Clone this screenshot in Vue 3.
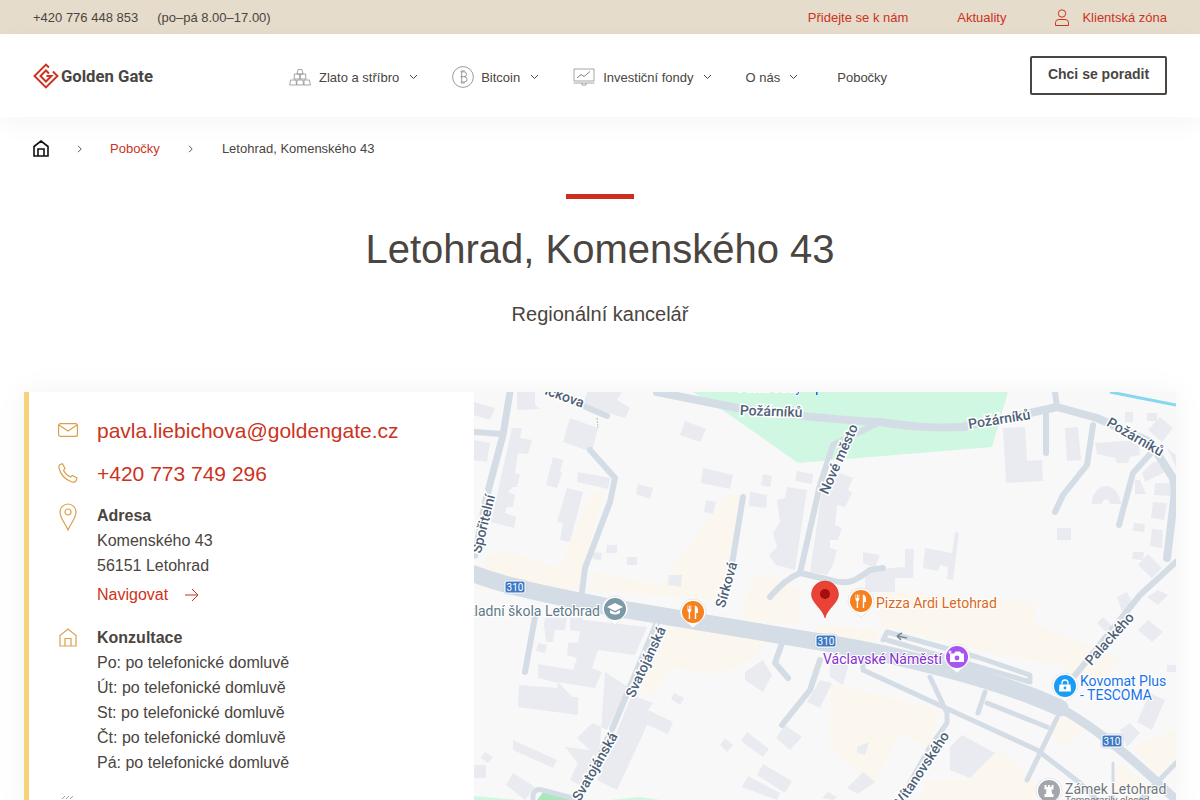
<script setup>
const hours = [
  "Po: po telefonické domluvě",
  "Út: po telefonické domluvě",
  "St: po telefonické domluvě",
  "Čt: po telefonické domluvě",
  "Pá: po telefonické domluvě",
];

// map data, in page coordinates (svg viewBox starts at the map's corner)
const beige = [
  "474,590 487,557 503,550 560,568 567,548 593,492 603,492 585,562 580,590",
  "593,572 660,585 710,518 727,495 740,495 730,558 720,600 590,590",
  "753,575 772,575 800,590 800,625 740,620",
  "670,623 770,640 750,660 720,675 670,667 652,695 640,690",
  "880,590 1037,603 1033,623 1123,660 1090,690 1060,665 1000,655 880,625",
  "830,683 940,710 930,747 900,733 873,783 830,747",
  "997,750 1037,783 1033,800 920,800 927,780 970,780",
  "1063,712 1090,727 1063,747 1052,733",
  "1176,730 1176,760 1157,777 1133,747",
  "820,625 880,630 870,650 800,645",
  "1120,763 1150,790 1130,800 1110,785",
];

const buildings = [
  "474,402 495,408 490,420 474,415",
  "517,392 535,392 535,405 540,409 517,410",
  "587,392 622,392 617,400 630,408 625,418 583,405",
  "570,418 598,428 592,452 563,442",
  "553,457 563,460 560,472 562,473 557,488 546,485",
  "578,472 610,478 608,489 577,482",
  "567,488 583,492 570,542 560,540 563,523 557,522",
  "512,428 522,428 520,438 532,440 528,454 518,453 515,473 520,475 517,487 513,487 508,492 515,495 513,507 507,507 505,513 516,517 514,528 491,522",
  "474,440 490,443 487,462 474,460",
  "685,421 706,429 700,442 680,435",
  "703,468 733,475 730,489 701,483",
  "638,484 653,488 650,499 636,494",
  "706,500 716,502 713,514 704,512",
  "763,474 772,476 770,487 761,485",
  "750,492 767,495 766,508 749,506",
  "797,471 813,474 812,484 795,481",
  "787,487 807,490 795,570 776,565 769,555 777,547 773,533 780,522 777,500 785,498",
  "823,483 832,483 840,473 853,478 848,490 852,493 845,507 837,505 835,525 842,528 838,540 830,540 830,548 837,550 833,565 827,575 810,572",
  "607,545 617,545 617,553 606,553",
  "627,557 637,557 637,565 627,565",
  "593,552 602,553 601,560 593,559",
  "669,575 682,575 681,587 668,585",
  "1003,428 1025,427 1027,461 1042,460 1043,481 1006,483",
  "1065,428 1078,427 1081,460 1067,461",
  "1095,443 1138,440 1140,455 1130,457 1128,463 1117,463 1115,458 1097,454",
  "1125,412 1133,412 1133,422 1125,422",
  "1147,413 1157,413 1157,421 1147,421",
  "1160,417 1173,428 1162,442 1148,430",
  "1167,448 1176,455 1176,467",
  "1160,460 1165,472 1145,482 1142,473 1152,463",
  "1155,483 1172,483 1171,496 1154,495",
  "1135,480 1140,480 1146,494 1135,494",
  "1153,502 1167,503 1164,520 1151,518",
  "1134,523 1145,524 1144,532 1133,531",
  "1152,529 1163,530 1162,548 1150,546",
  "1133,552 1144,552 1143,560 1132,559",
  "1148,554 1162,568 1152,578 1138,565",
  "1057,528 1071,528 1071,540 1057,540",
  "863,552 880,555 875,568 863,563",
  "925,548 952,553 955,532 959,533 953,580 947,579 948,567 940,565 938,571 923,568",
  "865,574 890,568 905,567 905,549 914,549 913,578 895,578 895,592 865,592",
  "583,620 647,627 635,655 598,650 592,668 602,672 595,688 558,682 572,697 578,697 578,715 518,707 519,685 557,688 558,683 538,678 538,664 573,670 577,658 567,655 568,643 578,642",
  "545,618 567,618 565,630 555,630 553,642 546,642 544,625",
  "570,618 583,618 583,632 570,630",
  "538,643 547,645 545,653 536,651",
  "605,672 628,687 607,730 593,723 588,727 577,738 590,750 565,747 578,763 570,780 583,787 600,745",
  "632,695 653,703 648,710 673,722 668,734 647,725 617,790 597,780",
  "513,740 557,760 553,768 513,750",
  "485,752 493,757 488,763 481,758",
  "474,765 486,765 486,778 474,778",
  "513,773 535,787 525,800 506,785",
  "674,693 684,698 680,705 671,699",
  "725,738 733,745 727,752 720,745",
  "747,732 769,749 763,757 741,741",
  "785,725 802,737 790,750 776,738",
  "763,764 792,781 785,793 757,775",
  "748,776 780,793 777,800 742,787",
  "828,792 837,797 833,800 822,798",
  "745,672 763,660 772,675 763,692 745,680",
  "832,683 820,708 807,702 820,680",
  "830,663 850,660 843,685 830,677",
  "857,747 869,742 865,755 857,753",
  "950,747 962,735 995,753 970,778 950,770",
  "847,788 863,772 875,782 858,794",
  "1117,597 1127,592 1132,602 1122,612",
  "1147,597 1158,590 1168,595 1158,605",
  "1097,623 1103,617 1113,627 1107,633",
  "1138,630 1148,620 1163,632 1152,642",
  "1167,665 1176,665 1176,672 1167,672",
  "1150,693 1165,700 1152,730 1137,722",
  "1120,730 1130,723 1140,733 1127,747",
];

const roads = [
  { d: "M474 574 C510 588 560 597 615 608 L826 643 C900 655 1000 680 1060 708", w: 17 },
  { d: "M1060 708 C1100 730 1140 765 1176 800", w: 9 },
  { d: "M510 392 L503 435 L487 495 L475 555", w: 7 },
  { d: "M474 432 L502 434", w: 6 },
  { d: "M560 396 L607 416", w: 6 },
  { d: "M590 450 L615 478 L610 502 L585 568 L582 592", w: 6 },
  { d: "M743 497 L733 558 L724 600", w: 6 },
  { d: "M880 422 L833 445 L820 485 L800 573", w: 6 },
  { d: "M657 392 L737 408 C790 415 840 420 880 422 C920 428 940 428 963 427 L1030 413 L1057 407 L1097 418 L1150 442 L1173 478 L1175 492 L1167 558", w: 8 },
  { d: "M1055 392 L1057 407", w: 6 },
  { d: "M1046 415 L1046 453", w: 6 },
  { d: "M1093 425 L1087 465 L1063 495 L1055 512", w: 6 },
  { d: "M1152 452 L1133 473 L1119 525", w: 6 },
  { d: "M1176 562 L1140 595 L1077 673 L1060 692", w: 6 },
  { d: "M770 597 C780 585 790 577 800 573 L830 580 C850 586 856 580 870 570 L883 568", w: 6 },
  { d: "M782 643 L775 663 L788 678", w: 6 },
  { d: "M820 660 L810 690 L782 725", w: 6 },
  { d: "M535 617 L525 672", w: 6 },
  { d: "M658 620 L613 727 L580 797", w: 6 },
  { d: "M883 640 L887 632 L977 657 L1030 675 L1030 682 L887 640", w: 5 },
  { d: "M863 650 L863 670 L1037 750 L1080 783 L1097 800", w: 5 },
  { d: "M930 677 L947 713 L947 723 L930 747 L903 795", w: 5 },
  { d: "M985 692 L978 713", w: 5 },
  { d: "M987 703 L1047 727", w: 5 },
  { d: "M1057 718 L1027 780", w: 5 },
  { d: "M1176 763 L1140 800", w: 5 },
  { d: "M1113 763 L1113 800", w: 3 },
  { d: "M533 800 L533 795 Q535 788 542 790 L580 800", w: 5 },
];

const roadLabels = [
  { t: "ickova", x: 563, y: 401, r: 20 },
  { t: "Požárníků", x: 771, y: 416, r: 2 },
  { t: "Požárníků", x: 1000, y: 424, r: -9 },
  { t: "Požárníků", x: 1133, y: 441, r: 30 },
  { t: "Nové město", x: 843, y: 461, r: -66 },
  { t: "Spořitelní", x: 488, y: 525, r: -76 },
  { t: "Sírková", x: 731, y: 586, r: -74 },
  { t: "Svatojánská", x: 650, y: 664, r: -65 },
  { t: "Svatojánská", x: 599, y: 769, r: -60 },
  { t: "Palackého", x: 1113, y: 642, r: -48 },
  { t: "Vítanovského", x: 926, y: 771, r: -56 },
];

const shields = [
  { x: 515, y: 587 },
  { x: 826, y: 641 },
  { x: 1112, y: 741 },
];

const pois = [
  { x: 615, y: 609, c: "#7b9aa6", icon: "school" },
  { x: 693, y: 612, c: "#f5811f", icon: "food" },
  { x: 861, y: 601, c: "#f5811f", icon: "food" },
  { x: 957, y: 657, c: "#a855f0", icon: "photo" },
  { x: 1065, y: 686, c: "#1a9bf5", icon: "shop" },
  { x: 1049, y: 791, c: "#a3a7ab", icon: "castle" },
];
</script>

<template>
  <div class="page">
    <div class="topbar">
      <div class="topbar__left">
        <span>+420 776 448 853</span>
        <span>(po–pá 8.00–17.00)</span>
      </div>
      <div class="topbar__right">
        <a class="join">Přidejte se k nám</a>
        <a>Aktuality</a>
        <a class="client">
          <svg width="16" height="17" viewBox="0 0 16 17" fill="none" stroke="#cc3321" stroke-width="1">
            <circle cx="8" cy="4.5" r="3.7" />
            <path d="M1.5 16.5 V13.5 Q1.5 10.5 5 10.5 H11 Q14.5 10.5 14.5 13.5 V16.5 Z" />
          </svg>
          Klientská zóna
        </a>
      </div>
    </div>

    <header class="header">
      <div class="logo">
        <svg width="26" height="26" viewBox="0 0 26 26" fill="none" stroke="#cc3321" stroke-width="2">
          <path d="M16 4.5 L13 1.5 L1.5 13 L13 24.5 L24.5 13 L20 8.5 M16 10.5 L13 7.5 L7.5 13 L13 18.5 L18.5 13 H13.5" />
        </svg>
        <span>Golden Gate</span>
      </div>

      <nav class="nav">
        <a class="nav__item nav__item--first">
          <svg width="22" height="18" viewBox="0 0 22 18" fill="none" stroke="#8f8f8f" stroke-width="0.8">
            <path d="M9 1.5 H13 L14 6 H8 Z M5.5 6 H10.5 L11 11 H5 Z M11.5 6 H16.5 L17 11 H11 Z M1.5 12 H7 L7.5 17 H.7 Z M8 12 H14 L14.5 17 H7.8 Z M15 12 H20.5 L21.3 17 H15 Z" />
          </svg>
          Zlato a stříbro
          <svg class="chev" width="9" height="6" viewBox="0 0 9 6"><path d="M1 1 L4.5 4.5 L8 1" /></svg>
        </a>
        <a class="nav__item nav__item--btc">
          <svg width="22" height="22" viewBox="0 0 22 22" fill="none" stroke="#8f8f8f" stroke-width="0.9">
            <circle cx="11" cy="11" r="10.4" />
            <path d="M8.5 5.8 H12 Q14.5 5.8 14.5 8.3 Q14.5 10.7 12 10.7 H8.5 M12 10.7 Q15 10.7 15 13.3 Q15 16 12 16 H8.5 M9.7 5.8 V16 M10 4 V5.8 M12 4 V5.8 M10 16 V18 M12 16 V18" />
          </svg>
          Bitcoin
          <svg class="chev" width="9" height="6" viewBox="0 0 9 6"><path d="M1 1 L4.5 4.5 L8 1" /></svg>
        </a>
        <a class="nav__item">
          <svg width="22" height="18" viewBox="0 0 22 18" fill="none" stroke="#8f8f8f" stroke-width="0.8">
            <path d="M1 1 H21 V13 H1 Z M.5 15 H21.5 M9 15 V17 H13 V15" />
            <path d="M4 10 L8 6.5 L11 8.5 L17 3.5" stroke="#666" />
          </svg>
          Investiční fondy
          <svg class="chev" width="9" height="6" viewBox="0 0 9 6"><path d="M1 1 L4.5 4.5 L8 1" /></svg>
        </a>
        <a class="nav__item">
          O nás
          <svg class="chev" width="9" height="6" viewBox="0 0 9 6"><path d="M1 1 L4.5 4.5 L8 1" /></svg>
        </a>
        <a class="nav__item nav__item--plain">Pobočky</a>
      </nav>

      <button class="cta">Chci se poradit</button>
    </header>

    <div class="crumbs">
      <svg width="16" height="17" viewBox="0 0 16 17" fill="none" stroke="#111" stroke-width="1.6">
        <path d="M1 16 V6.5 L8 1 L15 6.5 V16 Z M5 16 V9 H11 V16" />
      </svg>
      <svg class="crumb-sep" width="5" height="8" viewBox="0 0 5 8"><path d="M1 .8 L4.2 4 L1 7.2" /></svg>
      <a>Pobočky</a>
      <svg class="crumb-sep" width="5" height="8" viewBox="0 0 5 8"><path d="M1 .8 L4.2 4 L1 7.2" /></svg>
      <span class="crumbs__last">Letohrad, Komenského 43</span>
    </div>

    <div class="heading">
      <div class="heading__bar"></div>
      <h1>Letohrad, Komenského 43</h1>
      <p>Regionální kancelář</p>
    </div>

    <section class="card">
      <div class="info">
        <div class="row row--big">
          <svg class="ico" width="20" height="14" viewBox="0 0 20 14" fill="none" stroke="#dda04a" stroke-width="1.2">
            <rect x=".6" y=".6" width="18.8" height="12.8" rx="2" />
            <path d="M1 2 L10 8 L19 2" />
          </svg>
          <a class="big-link">pavla.liebichova@goldengate.cz</a>
        </div>
        <div class="row row--big">
          <svg class="ico" width="20" height="20" viewBox="0 0 20 20" fill="none" stroke="#dda04a" stroke-width="1.2">
            <path d="M4.5 .8 L7 5.5 L5.5 7.5 Q7.5 11.5 12.5 14 L14.5 12.5 L19 15 L18 18 Q16.5 19.6 14 19 Q3.5 15.5 1 5 Q.5 2.5 2 1.5 Z" />
          </svg>
          <a class="big-link">+420 773 749 296</a>
        </div>
        <div class="row row--adr">
          <svg class="ico ico--pin" width="18" height="28" viewBox="0 0 18 28" fill="none" stroke="#dda04a" stroke-width="1.2">
            <path d="M9 27 C6 20 1 15 1 9 A8 8 0 0 1 17 9 C17 15 12 20 9 27 Z" />
            <circle cx="9" cy="9" r="3" />
          </svg>
          <div class="block">
            <strong>Adresa</strong>
            <div>Komenského 43</div>
            <div>56151 Letohrad</div>
            <a class="nav-link">
              Navigovat
              <svg width="14" height="14" viewBox="0 0 14 14" fill="none" stroke="#cc3321" stroke-width="1">
                <path d="M0 7 H13 M7 1 L13 7 L7 13" />
              </svg>
            </a>
          </div>
        </div>
        <div class="row row--hours">
          <svg class="ico ico--home" width="18" height="19" viewBox="0 0 18 19" fill="none" stroke="#dda04a" stroke-width="1.2">
            <path d="M1 18 V7.5 L9 1 L17 7.5 V18 Z M6 18 V10.5 H12 V18" />
          </svg>
          <div class="block">
            <strong>Konzultace</strong>
            <div v-for="line in hours" :key="line">{{ line }}</div>
          </div>
        </div>
        <div class="row row--more">
          <svg class="ico" width="20" height="12" viewBox="0 0 20 12" fill="none" stroke="#8a8a8a" stroke-width="0.8">
            <path d="M4 4 L7 1 M8 4 L11 1 M12 4 L15 1" />
          </svg>
        </div>
      </div>

      <svg class="map" viewBox="474 392 702 408" width="702" height="408">
        <rect x="474" y="392" width="702" height="408" fill="#f8f8f8" />
        <polygon points="693,392 727,413 798,463 992,447 1008,392" fill="#d0f7e2" />
        <polygon points="474,796 520,800 474,800" fill="#d0f7e2" />
        <polygon points="537,800 545,790 560,795 575,800" fill="#a9e8bf" />
        <polygon points="610,800 640,797 660,800" fill="#d0f7e2" />
        <path d="M1110 392 L1176 405" stroke="#87d7ef" stroke-width="3" fill="none" />
        <polygon v-for="(p, i) in beige" :key="'b' + i" :points="p" fill="#fbf7ee" />
        <polygon v-for="(p, i) in buildings" :key="'h' + i" :points="p" fill="#e9ebf0" />
        <path d="M1092 504 C1092 490 1102 486 1106 486 C1112 486 1120 492 1121 504 L1110 504 C1110 498 1102 498 1102 504 Z" fill="#e9ebf0" />
        <path
          v-for="(r, i) in roads"
          :key="'r' + i"
          :d="r.d"
          :stroke-width="r.w"
          fill="none"
          stroke="#d4dde6"
          stroke-linecap="round"
          stroke-linejoin="round"
        />
        <path d="M597 418 L598 428" stroke="#8fd8b0" stroke-width="1" stroke-dasharray="2 1" />
        <path d="M907 638 L897 636 M897 636 L902 633 M897 636 L901 640" stroke="#7c8a9a" stroke-width="1.6" fill="none" />

        <text x="770" y="392" class="poi-text" fill="#1a73e8" text-anchor="middle">Farní sady</text>
        <rect x="816" y="386" width="1.6" height="9" fill="#1a73e8" />

        <text
          v-for="(l, i) in roadLabels"
          :key="'l' + i"
          class="road-label"
          :x="l.x"
          :y="l.y"
          text-anchor="middle"
          :transform="`rotate(${l.r} ${l.x} ${l.y})`"
        >{{ l.t }}</text>

        <g v-for="(s, i) in shields" :key="'s' + i" :transform="`translate(${s.x} ${s.y})`">
          <rect x="-11" y="-7" width="22" height="14" rx="3" fill="#fff" stroke="#b9c6d6" stroke-width="0.6" />
          <rect x="-9.5" y="-5.5" width="19" height="11" rx="1.5" fill="#3f78c4" />
          <text class="shield-text" y="3.5" text-anchor="middle">310</text>
        </g>

        <text x="600" y="616" class="poi-text" fill="#5f7a87" text-anchor="end">Základní škola Letohrad</text>
        <text x="876" y="608" class="poi-text" fill="#d9691f">Pizza Ardi Letohrad</text>
        <text x="823" y="664" class="poi-text" fill="#8430ce">Václavské Náměstí</text>
        <text x="1080" y="686" class="poi-text" fill="#1a73e8">Kovomat Plus</text>
        <text x="1080" y="700" class="poi-text" fill="#1a73e8">- TESCOMA</text>
        <text x="1065" y="794" class="poi-text" fill="#70757a">Zámek Letohrad</text>
        <text x="1065" y="804" class="poi-small" fill="#70757a">Temporarily closed</text>

        <g v-for="(m, i) in pois" :key="'m' + i" :transform="`translate(${m.x} ${m.y})`">
          <path d="M-13 0 A13 13 0 1 1 13 0 C13 7 6 10 0 16 C-6 10 -13 7 -13 0 Z" fill="#fff" stroke="#cfd3d8" stroke-width="0.5" />
          <circle r="11" :fill="m.c" />
          <g v-if="m.icon === 'food'" fill="#fff">
            <path d="M-5.5 -6.5 H-4.7 V-3 H-4 V-6.5 H-3.2 V-3 H-2.5 V-6.5 H-1.7 V-1.5 Q-1.7 -.2 -2.9 .1 V7 H-4.3 V.1 Q-5.5 -.2 -5.5 -1.5 Z" />
            <path d="M1.8 7 V-6.5 Q5 -6 5 -1.5 V1 H3.2 V7 Z" />
          </g>
          <g v-if="m.icon === 'school'" fill="#fff">
            <path d="M0 -6 L8 -2 L0 2 L-8 -2 Z" />
            <path d="M-5 1 L0 3.5 L5 1 V4 Q0 7 -5 4 Z" />
          </g>
          <g v-if="m.icon === 'photo'" fill="#fff">
            <path d="M-7 -3.5 H-3 L-1.5 -5.5 H3 L4.5 -3.5 H7 V5 H-7 Z" />
            <circle cy="1" r="2.4" :fill="m.c" />
            <path d="M-7 -6.5 V-3 M-8.7 -5 H-5.3" stroke="#fff" stroke-width="1.2" />
          </g>
          <g v-if="m.icon === 'shop'" fill="#fff">
            <path d="M-5.5 -1.5 H5.5 L6 5.5 H-6 Z" />
            <path d="M-3 -1.5 V-3 A3 3 0 0 1 3 -3 V-1.5" fill="none" stroke="#fff" stroke-width="1.3" />
            <circle cy="2" r="1.4" :fill="m.c" />
          </g>
          <g v-if="m.icon === 'castle'" fill="#fff">
            <path d="M-4.5 -6 H-2.5 V-4 H-1 V-6 H1 V-4 H2.5 V-6 H4.5 V-1.5 H2.5 L3 3 H4.5 V6 H-4.5 V3 H-3 L-2.5 -1.5 H-4.5 Z" />
          </g>
        </g>

        <g transform="translate(825 581)">
          <path d="M0 37 C-2 28 -13.5 22 -13.5 13.5 A13.5 13.5 0 0 1 13.5 13.5 C13.5 22 2 28 0 37 Z" fill="#ea4335" stroke="#c5221f" stroke-width="0.5" />
          <circle cy="13" r="5" fill="#a50e0e" />
        </g>
      </svg>
    </section>
  </div>
</template>

<style scoped>
.page {
  height: 800px;
  overflow: hidden;
  font-family: "Liberation Sans", Arial, sans-serif;
  color: #4a4540;
  background: #fff;
}

a {
  color: #cc3321;
  text-decoration: none;
}

.topbar {
  height: 34px;
  background: #e5dccb;
  display: flex;
  align-items: center;
  justify-content: space-between;
  padding: 0 33px;
  font-size: 13px;
}

.topbar__left {
  display: flex;
  gap: 19px;
}

.topbar__right {
  display: flex;
  align-items: center;
  gap: 48px;
}

.join {
  margin-right: 1px;
}

.client {
  display: flex;
  align-items: center;
  gap: 12px;
}

.header {
  height: 83px;
  display: flex;
  align-items: flex-start;
  padding: 0 33px;
  background: #fff;
  box-shadow: 0 8px 24px rgba(0, 0, 0, 0.04);
  position: relative;
}

.logo {
  display: flex;
  align-items: center;
  gap: 2px;
  margin-top: 29px;
  font-family: Roboto, sans-serif;
  font-weight: 700;
  font-size: 16.7px;
  width: 120px;
  flex-shrink: 0;
  white-space: nowrap;
}

.nav {
  display: flex;
  align-items: center;
  margin-left: 136px;
  margin-top: 32px;
  gap: 34px;
  font-size: 13px;
}

.nav__item {
  display: flex;
  align-items: center;
  gap: 8px;
  color: #4a4540;
  height: 22px;
  white-space: nowrap;
}

.nav__item--plain {
  margin-left: 5px;
}

.chev {
  fill: none;
  stroke: #4a4540;
  stroke-width: 1;
  margin-left: 1px;
}

.nav__item--first .chev {
  margin-left: 2px;
}

.nav__item--btc {
  gap: 7px;
}

.nav__item--btc .chev {
  margin-left: 3px;
}

.cta {
  margin-left: auto;
  margin-top: 22px;
  width: 137px;
  height: 39px;
  border: 2px solid #4a4540;
  border-radius: 2px;
  background: #fff;
  color: #4a4540;
  font-family: inherit;
  font-weight: 700;
  font-size: 14px;
  padding: 0 0 3px;
}

.crumbs {
  display: flex;
  align-items: center;
  height: 17px;
  margin-top: 23px;
  padding: 0 33px;
  gap: 28px;
  font-size: 13px;
}

.crumbs__last {
  margin-left: 1px;
}

.crumb-sep {
  fill: none;
  stroke: #4a4540;
  stroke-width: 0.9;
}

.heading {
  display: flex;
  flex-direction: column;
  align-items: center;
  margin-top: 37px;
}

.heading__bar {
  width: 68px;
  height: 5px;
  background: #cd2e1c;
}

.heading h1 {
  margin: 25px 0 0;
  font-weight: 400;
  font-size: 40px;
  line-height: 50px;
}

.heading p {
  margin: 27px 0 0;
  font-size: 20px;
  line-height: 26px;
}

.card {
  display: flex;
  margin: 65px 24px 0;
  height: 420px;
  background: #fff;
  box-shadow: 0 0 30px rgba(0, 0, 0, 0.05);
}

.info {
  width: 450px;
  flex-shrink: 0;
  box-sizing: border-box;
  border-left: 5px solid #f8d27a;
  padding: 24px 0 0 29px;
  font-size: 16px;
  line-height: 25px;
}

.row {
  display: flex;
  align-items: flex-start;
}

.ico {
  width: 20px;
  margin-right: 19px;
  flex-shrink: 0;
}

.row--big {
  align-items: center;
  height: 28px;
  margin-bottom: 15px;
}

.big-link {
  font-size: 21px;
  white-space: nowrap;
}

.row--adr .block {
  margin-top: 1px;
}

.ico--pin {
  margin-top: 1px;
}

.block strong {
  display: block;
}

.nav-link {
  display: flex;
  align-items: center;
  gap: 17px;
  margin-top: 4px;
}

.row--hours {
  margin-top: 18px;
}

.ico--home {
  margin-top: 3px;
}

.row--more {
  margin-top: 20px;
}

.map {
  display: block;
  flex-shrink: 0;
}

.road-label {
  font-family: Roboto, sans-serif;
  font-weight: 500;
  font-size: 14px;
  fill: #4e5f78;
  stroke: #fff;
  stroke-width: 3px;
  paint-order: stroke;
}

.shield-text {
  font-family: Roboto, sans-serif;
  font-size: 10px;
  fill: #fff;
}

.poi-text {
  font-family: Roboto, sans-serif;
  font-size: 14px;
  stroke: #fff;
  stroke-width: 2px;
  paint-order: stroke;
}

.poi-small {
  font-family: Roboto, sans-serif;
  font-size: 10px;
}
</style>
